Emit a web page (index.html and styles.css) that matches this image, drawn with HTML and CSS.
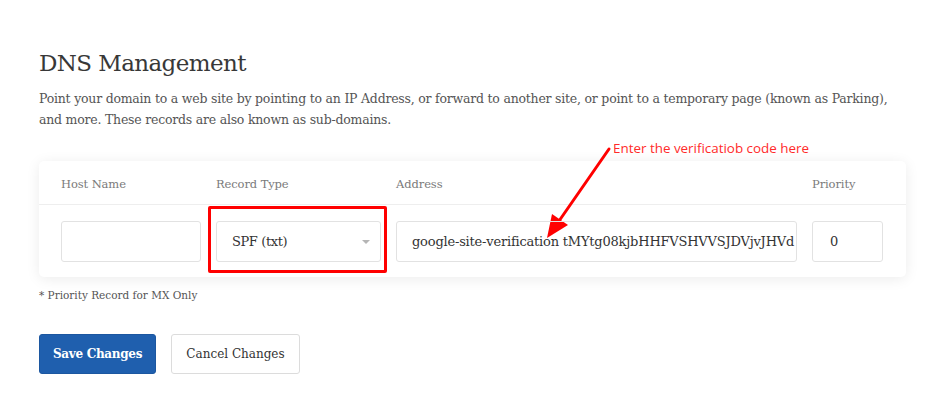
FILE: index.html
```html
<!DOCTYPE html>
<html lang="en">
<head>
<meta charset="utf-8">
<title>DNS Management</title>
<link rel="stylesheet" href="styles.css">
</head>
<body>
<div class="page">
  <h1 class="title">DNS Management</h1>
  <p class="intro">Point your domain to a web site by pointing to an IP Address, or forward to another site, or point to a temporary page (known as Parking), and more. These records are also known as sub-domains.</p>

  <div class="card">
    <div class="annotation">
      <svg class="arrow" width="80" height="100" viewBox="0 0 80 100">
        <line x1="70" y1="4" x2="20" y2="76" stroke="#f00" stroke-width="3" stroke-linecap="round"/>
        <polygon points="8,93 13,69 29,80" fill="#f00"/>
      </svg>
      <span class="annotation-text">Enter the verificatiob code here</span>
    </div>
    <div class="row head">
      <div class="label">Host Name</div>
      <div class="label">Record Type</div>
      <div class="label">Address</div>
      <div class="label">Priority</div>
    </div>
    <div class="row body">
      <div class="field"></div>
      <div class="field select">
        <span>SPF (txt)</span>
        <span class="caret"></span>
        <div class="highlight"></div>
      </div>
      <div class="field address">google-site-verification tMYtg08kjbHHFVSHVVSJDVjvJHVd</div>
      <div class="field prio">0</div>
    </div>
  </div>

  <p class="note">* Priority Record for MX Only</p>

  <div class="actions">
    <button class="btn primary">Save Changes</button>
    <button class="btn secondary">Cancel Changes</button>
  </div>
</div>
</body>
</html>
```

FILE: styles.css
```css
html, body {
  margin: 0;
  background: #ffffff;
}
body {
  font-family: "DejaVu Serif", "Liberation Serif", serif;
  color: #444;
}
.page {
  padding: 45px 34px 0 39px;
  width: 867px;
}
.title {
  margin: 0;
  font-size: 23px;
  line-height: 36px;
  font-weight: 300;
  color: #383838;
  letter-spacing: -0.6px;
}
.intro {
  margin: 7px 0 0;
  max-width: 850px;
  font-size: 12.5px;
  line-height: 21px;
  color: #555;
  letter-spacing: -0.22px;
}
.card {
  position: relative;
  margin-top: 31px;
  background: #fff;
  border-radius: 5px;
  box-shadow: 0 2px 14px rgba(0, 0, 0, 0.08);
}
.row {
  display: grid;
  grid-template-columns: 140px 165px 401px 71px;
  column-gap: 15px;
  padding: 0 23px 0 22px;
}
.head {
  height: 43px;
  align-items: center;
  border-bottom: 1px solid #eeeeee;
}
.label {
  font-size: 11.5px;
  color: #7a7a7a;
  letter-spacing: -0.1px;
  padding-top: 3px;
}
.body {
  padding-top: 16px;
  padding-bottom: 15px;
}
.field {
  position: relative;
  box-sizing: border-box;
  height: 41px;
  border: 1px solid #e2e2e2;
  border-radius: 3px;
  display: flex;
  align-items: center;
  font-size: 13px;
  color: #333;
  white-space: nowrap;
  overflow: visible;
}
.select {
  padding-left: 15px;
  justify-content: space-between;
  padding-right: 10px;
  letter-spacing: -0.4px;
}
.caret {
  width: 0;
  height: 0;
  border-left: 4px solid transparent;
  border-right: 4px solid transparent;
  border-top: 4px solid #b5b5b5;
}
.address {
  padding-left: 15px;
  overflow: hidden;
  letter-spacing: -0.2px;
}
.prio {
  padding-left: 17px;
}
.highlight {
  position: absolute;
  left: -9px;
  top: -16px;
  width: 179px;
  height: 67px;
  box-sizing: border-box;
  border: 3px solid #ff0000;
  border-radius: 2px;
}
.annotation {
  position: absolute;
  left: 500px;
  top: -16px;
  width: 380px;
  height: 100px;
}
.arrow {
  position: absolute;
  left: 0;
  top: 0;
}
.annotation-text {
  position: absolute;
  left: 74px;
  top: -6px;
  font-family: "Open Sans", "Liberation Sans", sans-serif;
  font-size: 13.4px;
  color: #ff2a2a;
  white-space: nowrap;
}
.note {
  margin: 10px 0 0;
  font-size: 10.5px;
  line-height: 16px;
  color: #555;
}
.actions {
  display: flex;
  gap: 15px;
  margin-top: 31px;
}
.btn {
  height: 40px;
  box-sizing: border-box;
  border-radius: 3px;
  font-family: "DejaVu Serif", "Liberation Serif", serif;
  font-size: 12px;
  cursor: pointer;
}
.primary {
  width: 117px;
  background: #1f5fae;
  border: 1px solid #1c57a0;
  color: #fff;
  font-weight: bold;
  letter-spacing: -0.3px;
}
.secondary {
  width: 129px;
  background: #fff;
  border: 1px solid #dcdcdc;
  color: #333;
}
```
